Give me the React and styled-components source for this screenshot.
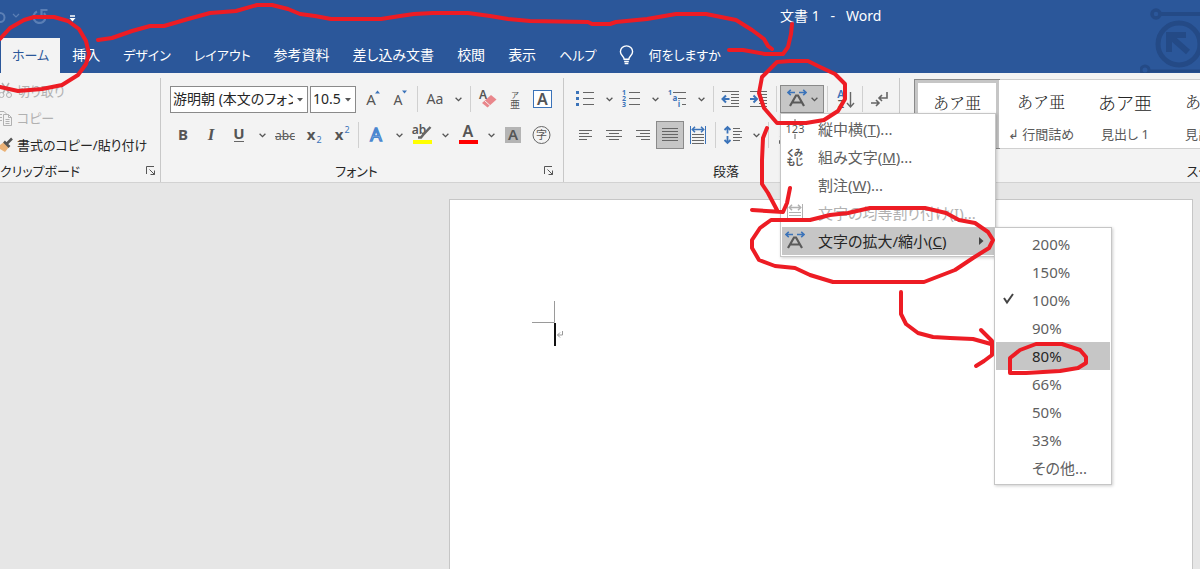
import React from 'react';
import styled, { createGlobalStyle, css } from 'styled-components';

const GlobalStyle = createGlobalStyle`
  * { box-sizing: border-box; }
  body {
    margin: 0;
    background: #e6e6e6;
    overflow: hidden;
  }
  body, button, select {
    font-family: "Noto Sans", "Noto Sans CJK JP", sans-serif;
    font-feature-settings: "palt";
    font-size: 14px;
    line-height: 20px;
    color: #262626;
  }
`;

const Shell = styled.div`
  position: relative;
  display: flex;
  flex-direction: column;
  min-height: 100vh;
  overflow: hidden;
`;

/* ---------- header ---------- */

const Header = styled.header`
  position: relative;
  background: #2b579a;
  color: #fff;
`;

const TitleRow = styled.div`
  display: grid;
  grid-template-columns: 65% 1fr;
  align-items: center;
  height: 38px;
`;

const QuickAccess = styled.div`
  display: flex;
  align-items: center;

  svg { display: block; }
`;

const Title = styled.span`
  padding-bottom: 6px;
  white-space: pre;
`;

const TabRow = styled.nav`
  display: flex;
  gap: 1px;
  height: 35px;
  padding-left: 1px;
`;

const Tab = styled.button`
  display: flex;
  align-items: center;
  gap: 14px;
  padding: 0 11px 2px;
  border: 0;
  font-size: ${p => (p.$kana ? '13px' : '14px')};
  white-space: nowrap;
  background: ${p => (p.$active ? '#f3f3f3' : 'transparent')};
  color: ${p => (p.$active ? '#2b579a' : '#fff')};
`;

const Circuit = styled.svg`
  position: absolute;
  top: 0;
  right: 0;
`;

/* ---------- ribbon ---------- */

const Ribbon = styled.div`
  display: flex;
  height: 110px;
  background: #f3f3f3;
  border-bottom: 1px solid #d2d2d2;
`;

const Group = styled.section`
  position: relative;
  flex: ${p => (p.$grow ? '1 1 0' : 'none')};
  min-width: 0;
  margin-top: 5px;
  padding: ${p => (p.$flush ? '0' : '0 5px 0 8px')};
  overflow: ${p => (p.$grow ? 'hidden' : 'visible')};
  display: flex;
  flex-direction: column;

  & + & { border-left: 1px solid #c8c8c8; }
`;

const GroupBody = styled.div`
  flex: 1;
  display: flex;
  flex-direction: column;
  gap: 8px;
  padding-top: ${p => (p.$tight ? '1px' : '7px')};
`;

const GroupFooter = styled.div`
  display: flex;
  align-items: center;
  width: ${p => (p.$wide ? '608px' : 'auto')};
  height: 20px;
  margin-bottom: 1px;
  padding-right: 4px;
`;

const GroupLabel = styled.span`
  flex: 1;
  text-align: ${p => p.$align || 'center'};
  font-size: 13px;
  white-space: nowrap;
`;

const Launcher = styled.button`
  display: flex;
  padding: 0;
  border: 0;
  background: none;
`;

const Row = styled.div`
  display: flex;
  align-items: center;
  height: 28px;
  padding-left: ${p => (p.$inset ? '1px' : '0')};
`;

const Tool = styled.button`
  flex: none;
  display: flex;
  align-items: center;
  justify-content: center;
  width: ${p => (p.$narrow ? '18px' : '28px')};
  height: 28px;
  padding: 0;
  border: 1px solid ${p => (p.$active ? '#8a8a8a' : 'transparent')};
  background: ${p => (p.$active ? '#c6c6c6' : 'transparent')};

  ${p => p.$wide && css`
    width: 44px;
    gap: 4px;
  `}
`;

const Divider = styled.span`
  flex: none;
  width: 1px;
  height: 26px;
  margin: 0 3px;
  background: #d0d0d0;
`;

const ClipList = styled.div`
  flex: 1;
  display: flex;
  flex-direction: column;
  width: 160px;
`;

const ClipButton = styled.button`
  display: flex;
  align-items: center;
  gap: 4px;
  height: 27px;
  padding: 0 0 2px;
  border: 0;
  background: none;
  font-size: 13px;
  white-space: nowrap;
  color: ${p => (p.disabled ? '#b1b1b1' : '#262626')};
`;

const SelectBox = styled.span`
  position: relative;
  flex: none;
  width: ${p => (p.$small ? '46px' : '138px')};
  margin-right: 2px;

  svg {
    position: absolute;
    top: 12px;
    right: 5px;
    pointer-events: none;
  }
`;

const Select = styled.select`
  display: block;
  width: 100%;
  height: 27px;
  padding: 0 14px 0 2px;
  border: 1px solid #8a8a8a;
  border-radius: 0;
  appearance: none;
  background: #fff;
  overflow: hidden;
`;

const Gallery = styled.div`
  display: flex;
  width: 608px;
  height: 70px;
  margin-left: 6px;
  border: 1px solid #d0d0d0;
  background: #fff;
`;

const StyleCard = styled.button`
  flex: none;
  display: flex;
  flex-direction: column;
  align-items: center;
  justify-content: space-between;
  width: 84px;
  padding: 10px 0 4px;
  border: 0;
  background: #fff;
  color: #5a5a5a;
  font-size: 13px;
  white-space: nowrap;

  ${p => p.$active && css`
    padding: 8px 0 1px;
    border: 3px solid #c6c6c6;
    outline: 1px solid #8a8a8a;
  `}
`;

const Sample = styled.span`
  font-size: ${p => (p.$large ? '18px' : '16px')};
  line-height: 24px;
  font-family: ${p => (p.$large ? '"Noto Sans CJK JP"' : '"Noto Serif CJK JP", "Noto Sans CJK JP"')}, sans-serif;
  font-weight: 300;
  font-feature-settings: normal;
  color: #262626;
`;

/* ---------- menus ---------- */

const MenuAnchor = styled.div`
  position: relative;
  display: flex;
`;

const Menu = styled.div`
  position: absolute;
  z-index: 5;
  top: ${p => (p.$sub ? '0' : '100%')};
  left: ${p => (p.$sub ? '100%' : '0')};
  width: ${p => (p.$sub ? '118px' : '216px')};
  padding: ${p => (p.$sub ? '2px 1px' : '1px')};
  border: 1px solid #c6c6c6;
  background: #fff;
  box-shadow: 1px 1px 3px rgba(0, 0, 0, 0.2);
`;

const MenuItem = styled.button`
  display: grid;
  grid-template-columns: 36px 1fr auto;
  align-items: center;
  width: 100%;
  height: 28px;
  padding: 0 10px 0 0;
  border: 0;
  text-align: left;
  font-size: 15px;
  white-space: nowrap;
  background: ${p => (p.$active ? '#c6c6c6' : 'transparent')};
  color: ${p => (p.disabled ? '#b1b1b1' : p.$active ? '#262626' : '#5f5f5f')};

  svg { margin-left: 3px; }
`;

/* ---------- document ---------- */

const Workspace = styled.main`
  flex: 1;
  display: flex;
  padding: 16px 7px 0 449px;
`;

const Page = styled.div`
  flex: 1;
  padding: 100px 0 0 82px;
  border: 1px solid #c6c6c6;
  border-bottom: 0;
  background: #fff;
`;

const Annotations = styled.svg`
  position: absolute;
  z-index: 10;
  top: 0;
  left: 0;
  pointer-events: none;
`;

/* ---------- icons ---------- */

const Chevron = () => (
  <svg width="7" height="5" viewBox="0 0 7 5" fill="none" stroke="#555" strokeWidth="1.3">
    <path d="M.6 .8 3.5 3.7 6.4 .8" />
  </svg>
);

const Arrow = () => (
  <svg width="6" height="4" viewBox="0 0 6 4"><path d="M0 0h6L3 3.6z" fill="#555" /></svg>
);

const Glyph = ({ children, w = 24, h = 24 }) => (
  <svg width={w} height={h} viewBox={`0 0 ${w} ${h}`} fill="none" stroke="#666" strokeWidth="1">
    {children}
  </svg>
);

const T = ({ x = 12, y = 17, s = 15, c = '#555', children, ...rest }) => (
  <text x={x} y={y} fontSize={s} fill={c} stroke="none" textAnchor="middle" {...rest}>{children}</text>
);

// each entry is [x1, x2] of one horizontal rule
const Lines = ({ rows, y = 7.5, step = 3 }) => (
  <path d={rows.map(([a, b], i) => `M${a} ${y + i * step}H${b}`).join('')} />
);

const ScaleIcon = () => (
  <Glyph w={20} h={20}>
    <path d="M1 3.5h7M3.8 .8 .9 3.5l2.9 2.7M12 3.5h7M16.2 .8l2.9 2.7-2.9 2.7" stroke="#3b73b9" strokeWidth="1.6" />
    <path d="M3 17 9 6.5h2L17 17M5.8 13.5h8.4" stroke="#5a5a5a" strokeWidth="2.2" />
  </Glyph>
);

const DistributeIcon = ({ color = '#3b73b9', line = '#666' }) => (
  <Glyph w={20} h={20}>
    <path d="M2.5 1v18M17.5 1v18" stroke={color} />
    <path d="M4.5 4.5h11M7 1.8 4.3 4.5 7 7.2M13 1.8l2.7 2.7L13 7.2" stroke={color} strokeWidth="1.5" />
    <path d="M4 9.5h12M4 12.5h12M4 15.5h12M4 18.5h12" stroke={line} />
  </Glyph>
);

const LauncherIcon = () => (
  <svg width="10" height="10" viewBox="0 0 10 10" fill="none" stroke="#555">
    <path d="M.5 8V.5H8M3.5 3.5l5 5M8.5 4.5v4h-4" />
  </svg>
);

const Bulb = () => (
  <svg width="15" height="20" viewBox="0 0 16 20" fill="none" stroke="#fff" strokeWidth="1.5">
    <path d="M5.5 14.5c0-3-4-4-4-8a6.3 6 0 0 1 13 0c0 4-4 5-4 8zM5.5 17h5M6 19h4" />
  </svg>
);

const Footer = ({ label, align }) => (
  <GroupFooter>
    <GroupLabel $align={align}>{label}</GroupLabel>
    <Launcher aria-label={`${label} の設定`}><LauncherIcon /></Launcher>
  </GroupFooter>
);

const Drop = () => <Tool $narrow aria-label="その他のオプション"><Chevron /></Tool>;

const tabs = [
  { label: '挿入' },
  { label: 'デザイン', kana: true },
  { label: 'レイアウト', kana: true },
  { label: '参考資料' },
  { label: '差し込み文書' },
  { label: '校閲' },
  { label: '表示' },
  { label: 'ヘルプ', kana: true },
];

const scales = ['200%', '150%', '100%', '90%', '80%', '66%', '50%', '33%', 'その他...'];

const Clipboard = () => (
  <Group $flush>
    <ClipList>
      <ClipButton disabled>
        <Glyph w={13} h={18}>
          <path d="M2 1l7 10M9 1 3 11" stroke="#b1b1b1" strokeWidth="1.5" />
          <circle cx="1.5" cy="13" r="2.5" stroke="#b1b1b1" />
          <circle cx="9" cy="13" r="2.5" stroke="#b1b1b1" />
        </Glyph>
        切り取り
      </ClipButton>
      <ClipButton disabled>
        <Glyph w={13} h={18}>
          <path d="M0 2.5h4l3 3M3.5 5.5h5l3 3v8h-8zM8.5 5.5v3h3M5.5 10.5h4M5.5 12.5h4M5.5 14.5h4M0 5.5h2M0 8.5h2M0 11.5h2" stroke="#b1b1b1" />
        </Glyph>
        コピー
      </ClipButton>
      <ClipButton>
        <Glyph w={13} h={18}>
          <path d="M0 9 4 6l5 5-4 5-5-3z" fill="#ebb277" stroke="none" />
          <path d="M4 5.5 9.5 11M7 7.5l5-5" stroke="#555" strokeWidth="2.5" />
        </Glyph>
        書式のコピー/貼り付け
      </ClipButton>
    </ClipList>
    <Footer label="クリップボード" align="left" />
  </Group>
);

const FontGroup = () => (
  <Group>
    <GroupBody>
      <Row $inset>
        <SelectBox>
          <Select aria-label="フォント名"><option>游明朝 (本文のフォント)</option></Select>
          <Arrow />
        </SelectBox>
        <SelectBox $small>
          <Select aria-label="フォント サイズ"><option>10.5</option></Select>
          <Arrow />
        </SelectBox>
        <Tool aria-label="拡大">
          <Glyph><T x={11} y={18}>A</T><path d="M15 6.5 17.5 3.5 20 6.5z" fill="#3b73b9" stroke="none" /></Glyph>
        </Tool>
        <Tool aria-label="縮小">
          <Glyph><T x={10} y={18} s={14}>A</T><path d="M14 3.5h5L16.5 6.5z" fill="#3b73b9" stroke="none" /></Glyph>
        </Tool>
        <Divider />
        <Tool aria-label="文字種の変換"><Glyph><T s={14}>Aa</T></Glyph></Tool>
        <Drop />
        <Divider />
        <Tool aria-label="書式のクリア">
          <Glyph>
            <T x={7} y={12} s={12} fontWeight="600">A</T>
            <path d="M6 16 15 8l5.500 4.500-9 8z" fill="#e9868b" stroke="none" />
            <path d="M8.500 13.500l5.500 5" stroke="#f3f3f3" />
          </Glyph>
        </Tool>
        <Tool aria-label="ルビ"><Glyph><T x={11} y={11} s={8}>ア</T><T x={11} y={21} s={10}>亜</T></Glyph></Tool>
        <Tool aria-label="囲み線">
          <Glyph><rect x="1.5" y="3.5" width="18" height="17" fill="#fff" stroke="#3b73b9" /><T x={10.5} y={18} s={16} fontWeight="600">A</T></Glyph>
        </Tool>
      </Row>
      <Row>
        <Tool aria-label="太字"><Glyph><T fontWeight="700">B</T></Glyph></Tool>
        <Tool aria-label="斜体">
          <Glyph><T s={17} fontWeight="700" fontStyle="italic" fontFamily="Liberation Serif, serif">I</T></Glyph>
        </Tool>
        <Tool aria-label="下線"><Glyph><T y={16} fontWeight="700">U</T><path d="M7 18.5h10" /></Glyph></Tool>
        <Drop />
        <Tool aria-label="取り消し線"><Glyph><T y={17} s={12}>abc</T><path d="M2 13.5h20" /></Glyph></Tool>
        <Tool aria-label="下付き"><Glyph><T x={10} y={17} fontWeight="700">x</T><T x={18} y={20} s={9} c="#3b73b9">2</T></Glyph></Tool>
        <Tool aria-label="上付き"><Glyph><T x={10} y={17} fontWeight="700">x</T><T x={18} y={10} s={9} c="#3b73b9">2</T></Glyph></Tool>
        <Divider />
        <Tool aria-label="文字の効果">
          <Glyph><text x="12" y="18" fontSize="18" textAnchor="middle" fill="#fff" stroke="#4a86cf" strokeWidth="1.4">A</text></Glyph>
        </Tool>
        <Drop />
        <Tool aria-label="蛍光ペン">
          <Glyph>
            <T x={9} y={11} s={12} fontWeight="600">ab</T>
            <path d="M20.5 4 13 12l-2 2.5H8" strokeWidth="2.5" />
            <path d="M3 17h19v4H3z" fill="#ffff00" stroke="none" />
          </Glyph>
        </Tool>
        <Drop />
        <Tool aria-label="フォントの色">
          <Glyph><T y={14} s={16} fontWeight="600">A</T><path d="M3 17h19v4H3z" fill="#ff0000" stroke="none" /></Glyph>
        </Tool>
        <Drop />
        <Tool aria-label="文字の網かけ">
          <Glyph><path d="M3 4h16v16H3z" fill="#b4b4b4" stroke="none" /><T x={11} y={17} s={15} fontWeight="600">A</T></Glyph>
        </Tool>
        <Tool aria-label="囲い文字"><Glyph><circle cx="11.5" cy="12" r="8.5" /><T x={11.5} y={16} s={11}>字</T></Glyph></Tool>
      </Row>
    </GroupBody>
    <Footer label="フォント" />
  </Group>
);

const ScaleMenu = () => (
  <Menu $sub>
    {scales.map(s => (
      <MenuItem key={s} $active={s === '80%'}>
        {s === '100%' ? (
          <Glyph w={24} h={16}><path d="M5 6l3 4.5L14 2" stroke="#444" strokeWidth="2" /></Glyph>
        ) : <span />}
        <span>{s}</span>
      </MenuItem>
    ))}
  </Menu>
);

const LayoutMenu = () => (
  <Menu>
    <MenuItem>
      <Glyph w={20} h={20}><T x={10} y={14} s={11}>123</T><path d="M10 0v4M10 15v5" /></Glyph>
      <span>縦中横(<u>T</u>)...</span>
    </MenuItem>
    <MenuItem>
      <Glyph w={20} h={20}><T x={10} y={9} s={9} fontWeight="600">くみ</T><T x={10} y={18} s={9} fontWeight="600">もじ</T></Glyph>
      <span>組み文字(<u>M</u>)...</span>
    </MenuItem>
    <MenuItem>
      <span />
      <span>割注(<u>W</u>)...</span>
    </MenuItem>
    <MenuItem disabled>
      <DistributeIcon color="#b1b1b1" line="#b1b1b1" />
      <span>文字の均等割り付け(<u>I</u>)...</span>
    </MenuItem>
    <MenuAnchor>
      <MenuItem $active>
        <ScaleIcon />
        <span>文字の拡大/縮小(<u>C</u>)</span>
        <svg width="5" height="8" viewBox="0 0 5 8"><path d="M0 0v8l4.5-4z" fill="#444" /></svg>
      </MenuItem>
      <ScaleMenu />
    </MenuAnchor>
  </Menu>
);

const ParagraphGroup = () => (
  <Group>
    <GroupBody>
      <Row>
        <Tool aria-label="箇条書き">
          <Glyph>
            <path d="M9 5.5h11M9 11.5h11M9 17.5h11" />
            <path d="M2 4h3v3H2zM2 10h3v3H2zM2 16h3v3H2z" fill="#3b73b9" stroke="none" />
          </Glyph>
        </Tool>
        <Drop />
        <Tool aria-label="段落番号">
          <Glyph>
            <path d="M9 5.5h11M9 11.5h11M9 17.5h11" />
            <T x={4} y={8} s={7} c="#3b73b9" fontWeight="700">1</T>
            <T x={4} y={14} s={7} c="#3b73b9" fontWeight="700">2</T>
            <T x={4} y={20} s={7} c="#3b73b9" fontWeight="700">3</T>
          </Glyph>
        </Tool>
        <Drop />
        <Tool aria-label="アウトライン">
          <Glyph>
            <path d="M7 5.5h13M12 11.5h8M16 17.5h4" />
            <T x={4} y={8} s={7} c="#3b73b9" fontWeight="700">1</T>
            <T x={9} y={14} s={8} c="#3b73b9" fontWeight="700">a</T>
            <T x={13} y={20} s={8} c="#3b73b9" fontWeight="700">i</T>
          </Glyph>
        </Tool>
        <Drop />
        <Divider />
        <Tool aria-label="インデントを減らす">
          <Glyph>
            <path d="M3 4.5h17M12 7.5h8M12 10.5h8M12 13.5h8M12 16.5h8M3 19.5h17" />
            <path d="M3.5 12h7M7 8.5 3.5 12 7 15.5" stroke="#3b73b9" strokeWidth="2" />
          </Glyph>
        </Tool>
        <Tool aria-label="インデントを増やす">
          <Glyph>
            <path d="M3 4.5h17M12 7.5h8M12 10.5h8M12 13.5h8M12 16.5h8M3 19.5h17" />
            <path d="M3 12h7M6.5 8.5 10 12l-3.5 3.5" stroke="#3b73b9" strokeWidth="2" />
          </Glyph>
        </Tool>
        <Divider />
        <MenuAnchor>
          <Tool $wide $active aria-label="拡張書式"><ScaleIcon /><Chevron /></Tool>
          <LayoutMenu />
        </MenuAnchor>
        <Divider />
        <Tool aria-label="並べ替え">
          <Glyph>
            <T x={8} y={11} s={11} c="#3b73b9" fontWeight="600">A</T>
            <T x={8} y={21} s={11} fontWeight="600">Z</T>
            <path d="M17.5 5v15M14 16l3.5 4 3.5-4" strokeWidth="1.4" />
          </Glyph>
        </Tool>
        <Divider />
        <Tool aria-label="編集記号">
          <Glyph>
            <path d="M19 5v6h-8M14 8l-3 3 3 3M3 16h8M8 13l3 3-3 3" strokeWidth="1.6" />
          </Glyph>
        </Tool>
      </Row>
      <Row>
        <Tool aria-label="左揃え"><Glyph><Lines rows={[[5, 18], [5, 15], [5, 18], [5, 13]]} /></Glyph></Tool>
        <Tool aria-label="中央揃え"><Glyph><Lines rows={[[4, 20], [7, 17], [4, 20], [7, 17]]} /></Glyph></Tool>
        <Tool aria-label="右揃え"><Glyph><Lines rows={[[6, 20], [10, 20], [6, 20], [11, 20]]} /></Glyph></Tool>
        <Tool $active aria-label="両端揃え"><Glyph><Lines y={5.5} rows={[[4, 20], [4, 20], [4, 20], [4, 20], [4, 20]]} /></Glyph></Tool>
        <Tool aria-label="均等割り付け"><DistributeIcon /></Tool>
        <Divider />
        <Tool aria-label="行間">
          <Glyph>
            <path d="M12 5.5h7M12 8.5h9M12 11.5h7M12 14.5h9M12 17.5h7" />
            <path d="M6.5 4v6.5M3.5 7l3-3 3 3M6.5 13v7M3.5 17l3 3 3-3" stroke="#3b73b9" strokeWidth="1.8" />
          </Glyph>
        </Tool>
        <Drop />
        <Divider />
        <Tool aria-label="塗りつぶし"><Glyph><path d="M6 14 11 8l5 5-5 4zM5.5 17.5h14v3h-14z" /></Glyph></Tool>
      </Row>
    </GroupBody>
    <Footer label="段落" />
  </Group>
);

const StyleGroup = () => (
  <Group $grow>
    <GroupBody $tight>
      <Gallery>
        <StyleCard $active><Sample>あア亜</Sample><span>↲ 標準</span></StyleCard>
        <StyleCard><Sample>あア亜</Sample><span>↲ 行間詰め</span></StyleCard>
        <StyleCard><Sample $large>あア亜</Sample><span>見出し 1</span></StyleCard>
        <StyleCard><Sample>あア亜</Sample><span>見出し 2</span></StyleCard>
      </Gallery>
    </GroupBody>
    <GroupFooter $wide><GroupLabel>スタイル</GroupLabel></GroupFooter>
  </Group>
);

const App = () => (
  <Shell>
    <GlobalStyle />
    <Header>
      <TitleRow>
        <QuickAccess>
          <svg width="80" height="30" viewBox="0 0 80 30" fill="none" stroke="#5b7fb5" strokeWidth="2">
            <path d="M0 9a4 4 0 0 1 0 9" />
            <path d="M13 10l3 3 3-3" strokeWidth="1.2" />
            <path d="M37 7.5a6 6 0 1 0 7 1.5M41.5 13V6h6" strokeWidth="2.2" />
            <path d="M70 12h5" stroke="#fff" strokeWidth="1.5" />
            <path d="M69.5 14h6l-3 3.5z" fill="#fff" stroke="none" />
          </svg>
        </QuickAccess>
        <Title>文書 1   -   Word</Title>
      </TitleRow>
      <TabRow>
        <Tab $active $kana>ホーム</Tab>
        {tabs.map(t => <Tab key={t.label} $kana={t.kana}>{t.label}</Tab>)}
        <Tab $kana><Bulb />何をしますか</Tab>
      </TabRow>
      <Circuit width="60" height="73" viewBox="0 0 60 73" fill="none" stroke="#244a86" strokeWidth="4">
        <circle cx="16" cy="14" r="4" strokeWidth="3.5" />
        <path d="M20 14h40" />
        <circle cx="39" cy="44" r="21" strokeWidth="5" />
        <path d="M29 52V35h17M31 37l17 15" strokeWidth="6" />
        <circle cx="5" cy="70" r="4" strokeWidth="3" />
        <path d="M9 71h51" strokeWidth="3" />
      </Circuit>
    </Header>
    <Ribbon>
      <Clipboard />
      <FontGroup />
      <ParagraphGroup />
      <StyleGroup />
    </Ribbon>
    <Workspace>
      <Page>
        <svg width="34" height="48" viewBox="0 0 34 48" fill="none" stroke="#9a9a9a">
          <path d="M0 22.5h22.5V1" />
          <path d="M23 23v23" stroke="#111" strokeWidth="2" />
          <path d="M30.5 31v4h-5M28 32.5 25.5 35l2.5 2.5" />
        </svg>
      </Page>
    </Workspace>
    <Annotations width="1200" height="569" viewBox="0 0 1200 569" fill="none" stroke="#ed1c24" strokeWidth="4" strokeLinejoin="round" strokeLinecap="round">
      <path d="M0 39 10 28 24 20 34 17H54L68 21 79 29 86 41 89 54 86 64 78 75 62 85 42 89 18 91 0 87" />
      <path d="M98 40 112 38 132 31 150 26 164 26 188 19 210 13 236 11 257 5H272L288 9 300 14 315 16 331 19H381L400 16 414 14 433 13H468L490 16 508 19 530 21 588 22 592 24H610L616 22 647 19 676 14H706L736 20 752 30 764 39 768 46 772 49" />
      <path d="M729 50H743L765 54H783L788 47 791 34 792 24" />
      <path d="M777 62 762 77 759 93 764 108 777 123H806L824 120 838 111 845 99V84L835 74 818 66 808 61H790z" />
      <path d="M767 128 763 138 762 160V184L768 193 777 210M752 210 783 212 787 203 790 188" />
      <path d="M771 220H810L830 215 848 213 870 208H925L946 213 959 220 975 223 988 232 993 240 989 248 973 258 955 270 924 282H833L810 275 795 268 775 266 759 260 752 248V240L760 228z" />
      <path d="M901 292V314L906 324 918 333 933 337 950 338 973 339 991 344M981 330 992 341V355L984 361 976 366" />
      <path d="M1010 373V358L1020 350 1036 344H1062L1080 350 1086 357V363L1078 368 1060 371 1026 373z" />
    </Annotations>
  </Shell>
);

export default App;
